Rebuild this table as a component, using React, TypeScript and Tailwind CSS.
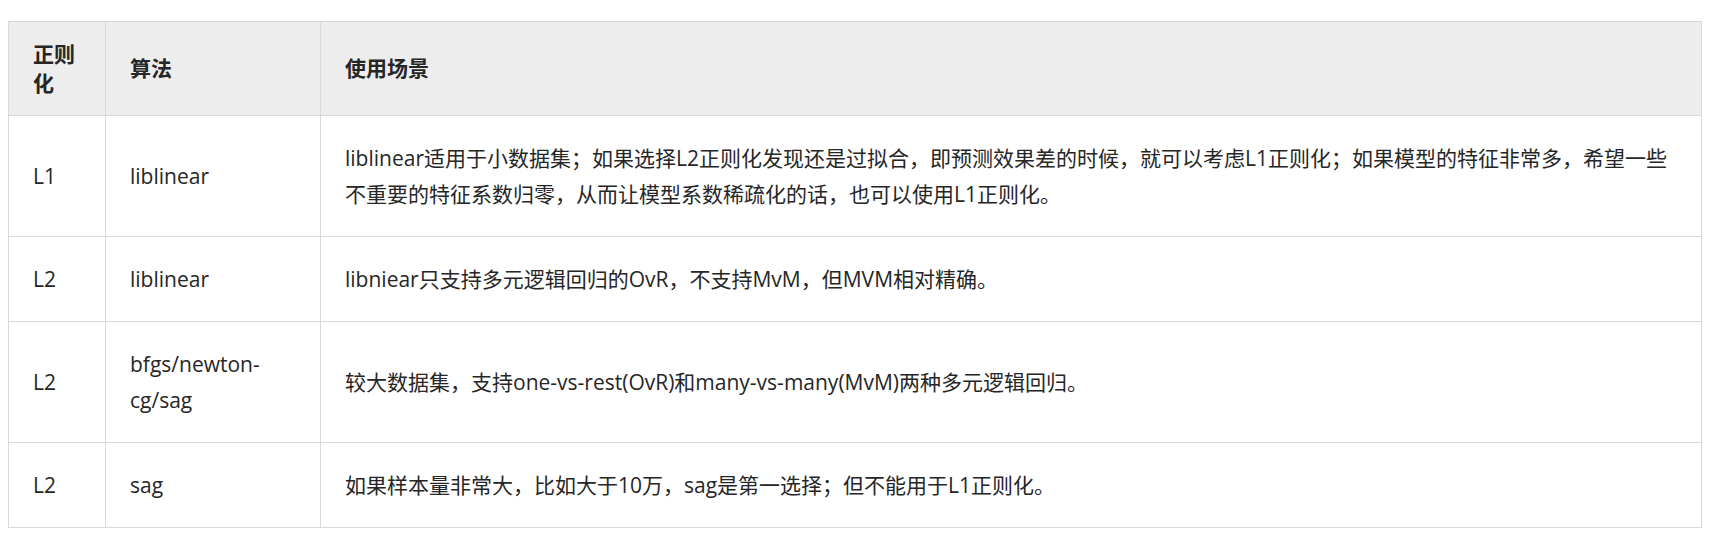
const rows = [
  {
    reg: "L1",
    algo: "liblinear",
    usage:
      "liblinear适用于小数据集；如果选择L2正则化发现还是过拟合，即预测效果差的时候，就可以考虑L1正则化；如果模型的特征非常多，希望一些不重要的特征系数归零，从而让模型系数稀疏化的话，也可以使用L1正则化。",
  },
  {
    reg: "L2",
    algo: "liblinear",
    usage: "libniear只支持多元逻辑回归的OvR，不支持MvM，但MVM相对精确。",
  },
  {
    reg: "L2",
    algo: "bfgs/newton-cg/sag",
    usage: "较大数据集，支持one-vs-rest(OvR)和many-vs-many(MvM)两种多元逻辑回归。",
  },
  {
    reg: "L2",
    algo: "sag",
    usage: "如果样本量非常大，比如大于10万，sag是第一选择；但不能用于L1正则化。",
  },
];

const font = { fontFamily: '"Open Sans", "Noto Sans CJK SC", sans-serif' };

export default function App() {
  return (
    <div className="min-h-screen bg-white pl-[8px] pt-[21px] text-[#262626]" style={font}>
      <table className="w-[1693px] table-fixed border-collapse text-[21px]">
        <colgroup>
          <col className="w-[97px]" />
          <col className="w-[215px]" />
          <col className="w-[1381px]" />
        </colgroup>
        <thead>
          <tr className="bg-[#ededed]">
            <th className="border border-[#d9d9d9] px-[24px] py-[18px] text-left align-middle font-bold leading-[28.5px]">
              正则化
            </th>
            <th className="border border-[#d9d9d9] px-[24px] py-[18px] text-left align-middle font-bold leading-[28.5px]">
              算法
            </th>
            <th className="border border-[#d9d9d9] px-[24px] py-[18px] text-left align-middle font-bold leading-[28.5px]">
              使用场景
            </th>
          </tr>
        </thead>
        <tbody>
          {rows.map((row, i) => (
            <tr key={i}>
              <td className="border border-[#d9d9d9] px-[24px] py-[24px] align-middle leading-[36px]">
                {row.reg}
              </td>
              <td className="border border-[#d9d9d9] px-[24px] py-[24px] align-middle leading-[36px]">
                {row.algo}
              </td>
              <td className="border border-[#d9d9d9] px-[24px] py-[24px] align-middle leading-[36px]">
                {row.usage}
              </td>
            </tr>
          ))}
        </tbody>
      </table>
    </div>
  );
}
